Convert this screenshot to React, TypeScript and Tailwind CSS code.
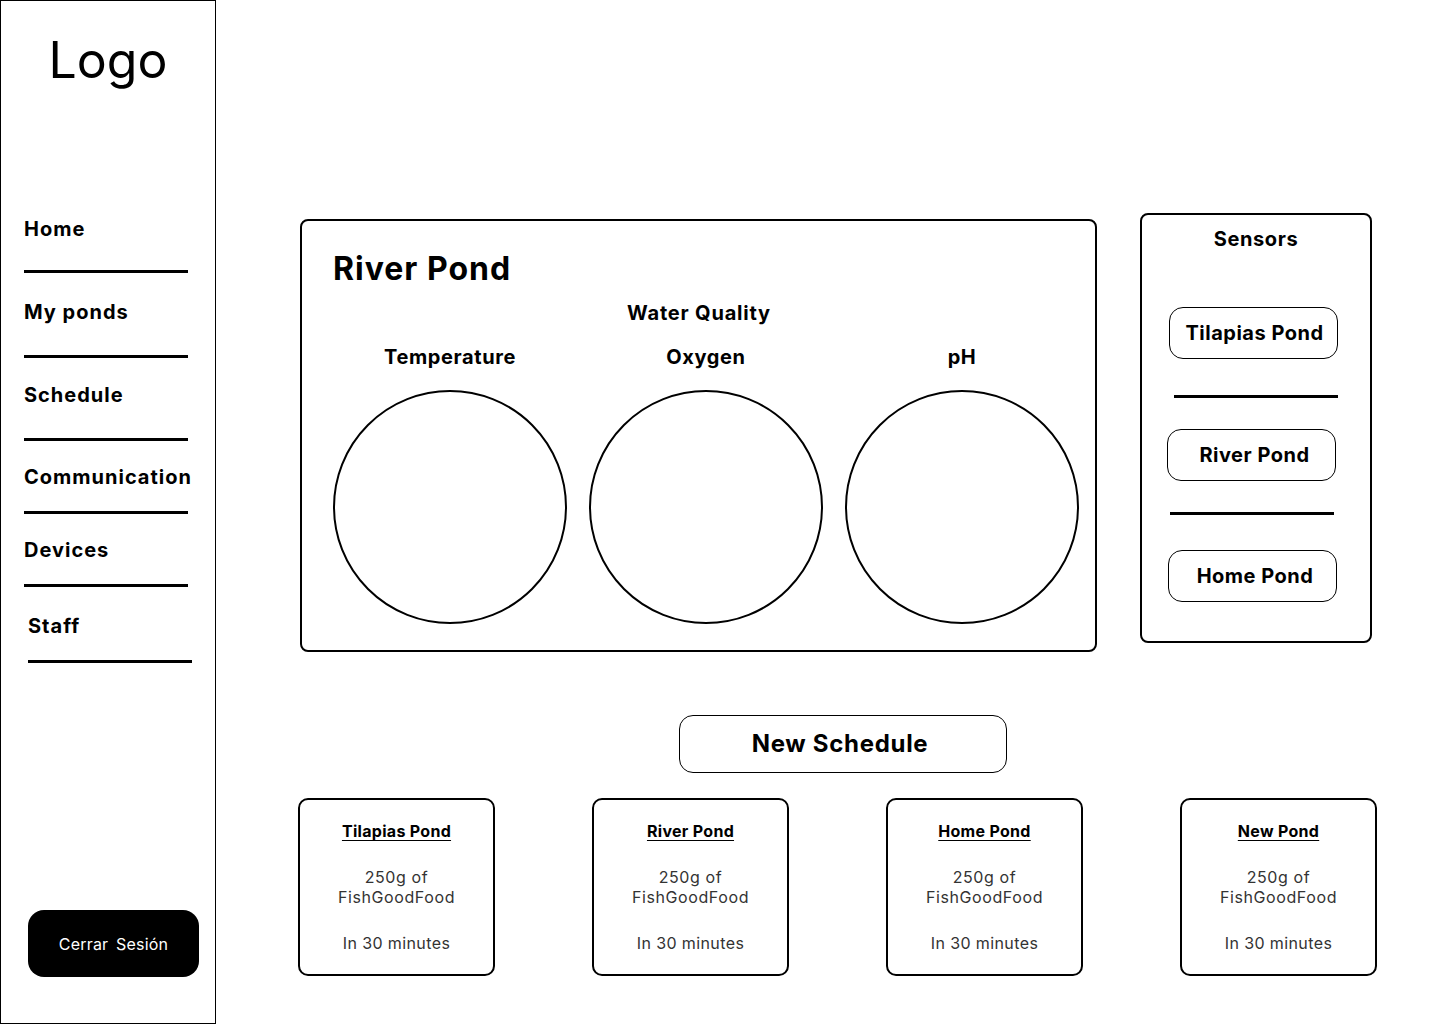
import React from "react";

const font = { fontFamily: "Inter, 'Noto Sans', sans-serif" };

function NavItem({ label, textCls, lineCls }: { label: string; textCls: string; lineCls: string }) {
  return (
    <div className="flex flex-col">
      <div className={textCls}>{label}</div>
      <div className={lineCls} />
    </div>
  );
}

function SensorBtn({ label, cls }: { label: string; cls: string }) {
  return (
    <div className={`flex h-[52px] w-[169px] items-center justify-center rounded-[14px] border border-black text-[20px] font-bold leading-[24px] tracking-[0.5px] ${cls}`}>
      {label}
    </div>
  );
}

function ScheduleCard({ title }: { title: string }) {
  return (
    <div className="flex h-[178px] w-[197px] flex-col items-center rounded-[10px] border-2 border-black pt-[21px] text-center">
      <div className="text-[16px] font-bold leading-[20px] tracking-[0.3px] underline underline-offset-[3px]">{title}</div>
      <div className="mt-[26px] text-[16px] leading-[20px] tracking-[0.6px] text-[#333]">
        250g of
        <br />
        FishGoodFood
      </div>
      <div className="mt-[26px] text-[16px] leading-[20px] tracking-[0.4px] text-[#333]">In 30 minutes</div>
    </div>
  );
}

export default function App() {
  return (
    <div className="flex min-h-[1024px] w-[1440px] bg-white text-black" style={font}>
      <aside className="flex h-[1024px] w-[216px] shrink-0 flex-col border border-black">
        <div className="mt-[29px] text-center text-[50px] leading-[60px]">Logo</div>
        <nav className="mt-[127px] flex flex-col pl-[23px] text-[20px] font-bold leading-[24px] tracking-[1px]">
          <NavItem label="Home" textCls="" lineCls="mt-[29px] h-[3px] w-[164px] bg-black" />
          <NavItem label="My ponds" textCls="mt-[27px]" lineCls="mt-[31px] h-[3px] w-[164px] bg-black" />
          <NavItem label="Schedule" textCls="mt-[25px]" lineCls="mt-[31px] h-[3px] w-[164px] bg-black" />
          <NavItem label="Communication" textCls="mt-[24px]" lineCls="mt-[22px] h-[3px] w-[164px] bg-black" />
          <NavItem label="Devices" textCls="mt-[24px]" lineCls="mt-[22px] h-[3px] w-[164px] bg-black" />
          <NavItem label="Staff" textCls="mt-[27px] pl-[4px]" lineCls="mt-[22px] ml-[4px] h-[3px] w-[164px] bg-black" />
        </nav>
        <div className="mt-auto mb-[46px] ml-[27px] flex h-[67px] w-[171px] items-center justify-center rounded-[16px] bg-black text-[16px] tracking-[0.2px] text-white [word-spacing:3px]">
          Cerrar Sesión
        </div>
      </aside>

      <main className="flex flex-1 flex-col pt-[213px]">
        <div className="ml-[84px] flex items-start">
          <section className="mt-[6px] flex h-[433px] w-[797px] flex-col rounded-[8px] border-2 border-black pl-[31px] pt-[28px]">
            <h1 className="text-[32px] font-bold leading-[40px] tracking-[1px]">River Pond</h1>
            <div className="mt-[12px] w-[746px] pr-[14px] text-center text-[20px] font-bold leading-[24px] tracking-[0.8px]">Water Quality</div>
            <div className="mt-[20px] grid w-[746px] grid-cols-3 gap-x-[22px] text-center text-[20px] font-bold leading-[24px] tracking-[0.6px]">
              <div>Temperature</div>
              <div>Oxygen</div>
              <div>pH</div>
            </div>
            <div className="mt-[21px] flex gap-[22px]">
              <div className="h-[234px] w-[234px] rounded-full border-2 border-black" />
              <div className="h-[234px] w-[234px] rounded-full border-2 border-black" />
              <div className="h-[234px] w-[234px] rounded-full border-2 border-black" />
            </div>
          </section>

          <section className="ml-[43px] flex h-[430px] w-[232px] flex-col rounded-[8px] border-2 border-black pt-[12px]">
            <div className="text-center text-[20px] font-bold leading-[24px] tracking-[0.6px]">Sensors</div>
            <SensorBtn label="Tilapias Pond" cls="mt-[56px] ml-[27px] pl-[2px]" />
            <div className="mt-[36px] ml-[32px] h-[3px] w-[164px] bg-black" />
            <SensorBtn label="River Pond" cls="mt-[31px] ml-[25px] pl-[6px]" />
            <div className="mt-[31px] ml-[28px] h-[3px] w-[164px] bg-black" />
            <SensorBtn label="Home Pond" cls="mt-[35px] ml-[26px] pl-[5px]" />
          </section>
        </div>

        <div className="mt-[63px] ml-[463px] flex h-[58px] w-[328px] items-center justify-center rounded-[14px] border border-black pr-[6px] text-[24px] font-bold leading-[30px] tracking-[0.7px]">
          New Schedule
        </div>

        <div className="mt-[25px] ml-[82px] flex gap-[97px]">
          <ScheduleCard title="Tilapias Pond" />
          <ScheduleCard title="River Pond" />
          <ScheduleCard title="Home Pond" />
          <ScheduleCard title="New Pond" />
        </div>
      </main>
    </div>
  );
}
